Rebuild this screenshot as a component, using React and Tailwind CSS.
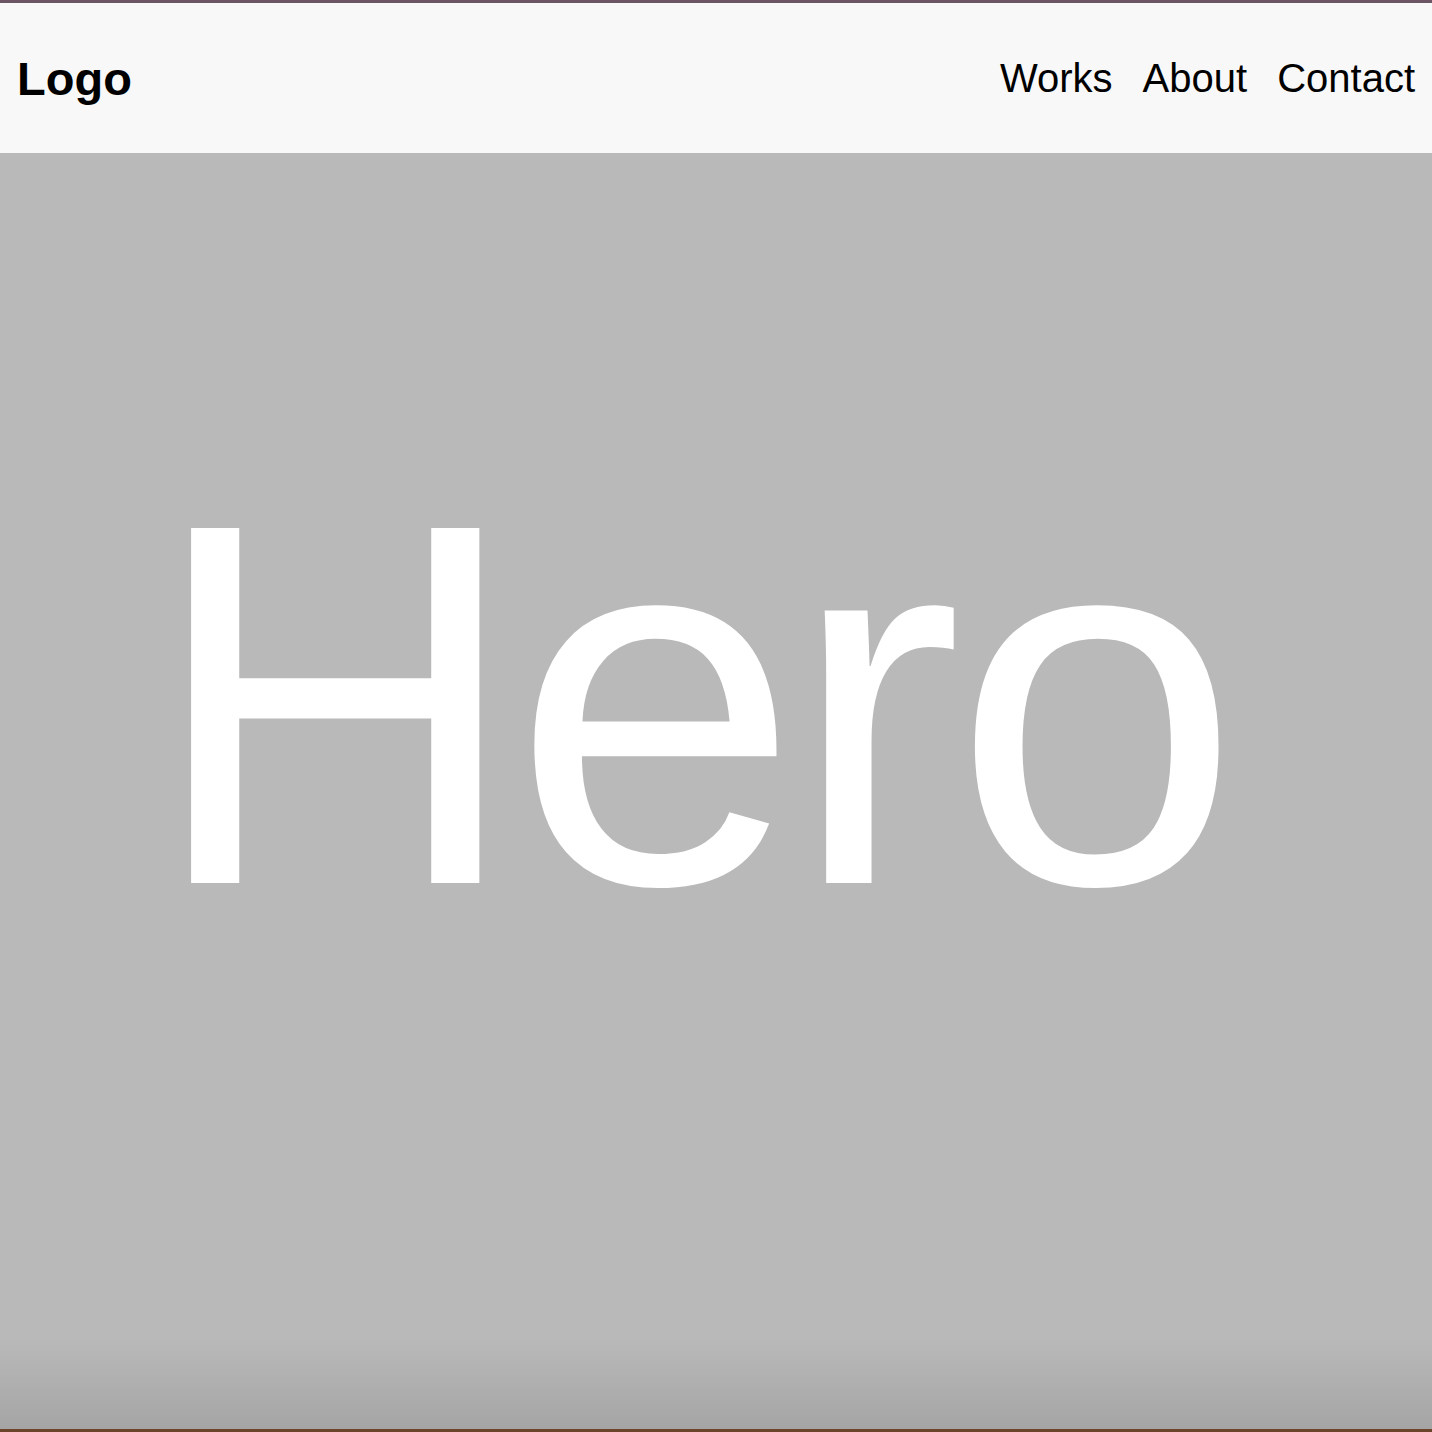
import React from 'react';

const links = ['Works', 'About', 'Contact'];

export default function App() {
  return (
    <div className="flex h-[1432px] flex-col font-['Liberation_Sans',Arial,sans-serif] text-black">
      <div className="h-[3px] bg-[#6c5565]" />

      <header className="flex h-[150px] items-center justify-between bg-[#f8f8f8] pl-[17px] pr-[17px]">
        <a href="#" className="text-[47px] font-bold leading-none">
          Logo
        </a>
        <nav className="flex items-center gap-[30px]">
          {links.map((link) => (
            <a key={link} href="#" className="text-[40px] leading-none">
              {link}
            </a>
          ))}
        </nav>
      </header>

      <main className="flex flex-1 flex-col items-center bg-[linear-gradient(to_bottom,#b9b9b9_93%,#a5a5a5_100%)] pt-[293px]">
        <h1 className="mr-[52px] text-[516px] font-normal leading-none tracking-[-9px] text-white">Hero</h1>
      </main>

      <div className="h-[3px] bg-[#6a4529]" />
    </div>
  );
}
